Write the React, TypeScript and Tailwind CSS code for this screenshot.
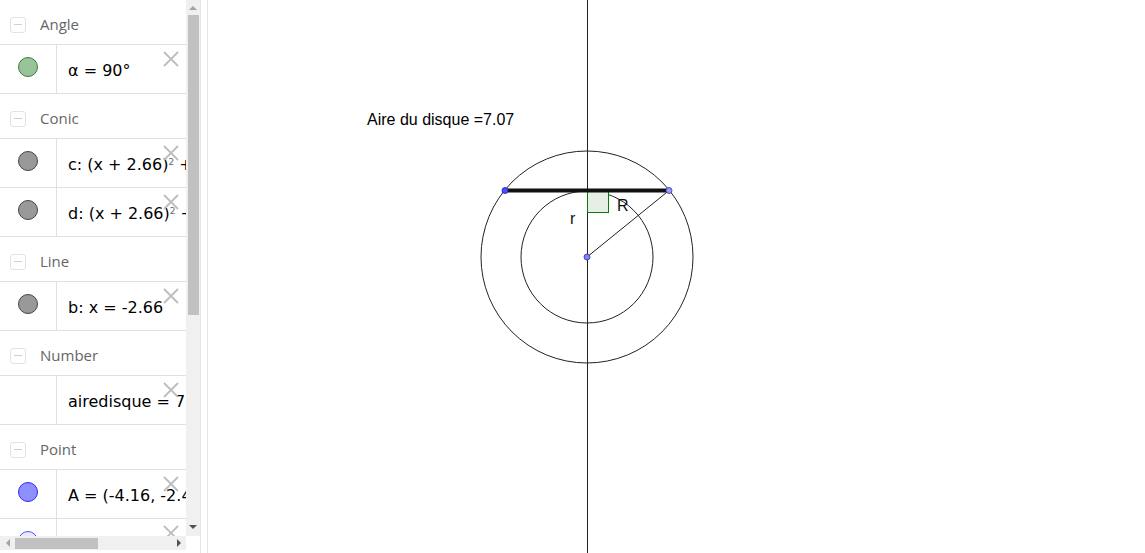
import React from "react";

function Header({ label }: { label: string }) {
  return (
    <div className="h-[45px] flex items-center border-b border-[#e0e0e0] shrink-0">
      <div className="ml-[10px] mt-[5px] w-[16px] h-[16px] border border-[#e3e3e3] rounded-[3px] flex items-center justify-center">
        <div className="w-[8px] h-[1.5px] bg-[#cfcfcf]" />
      </div>
      <span className="ml-[14px] mt-[4px] text-[15px] text-[#666]" style={{ fontFamily: "'Open Sans', sans-serif" }}>{label}</span>
    </div>
  );
}

function XIcon() {
  return (
    <svg width="18" height="18" viewBox="0 0 18 18" className="absolute left-[162px] top-[5px]">
      <path d="M2 2 L16 16 M16 2 L2 16" stroke="#bdbdbd" strokeWidth="1.8" />
    </svg>
  );
}

function Row({ marker, children }: { marker?: { fill: string; stroke: string }; children: React.ReactNode }) {
  return (
    <div className="h-[49px] flex border-b border-[#e0e0e0] relative shrink-0">
      <div className="w-[57px] border-r border-[#e0e0e0] flex items-center justify-center shrink-0">
        {marker && (
          <div className="w-[20px] h-[20px] mb-[4px] rounded-full border" style={{ background: marker.fill, borderColor: marker.stroke }} />
        )}
      </div>
      <div className="pl-[11px] pt-[3px] flex items-center whitespace-nowrap text-[16px] text-black" style={{ fontFamily: "'DejaVu Sans', sans-serif" }}>
        {children}
      </div>
      <XIcon />
    </div>
  );
}

const green = { fill: "#99c499", stroke: "#3f7a3f" };
const gray = { fill: "#999999", stroke: "#444444" };
const blue = { fill: "#8f8fff", stroke: "#2a2aff" };

export default function App() {
  return (
    <div className="w-[1145px] h-[553px] flex bg-white overflow-hidden">
      <div className="w-[200px] h-full flex flex-col shrink-0">
        <div className="h-[536px] flex">
          <div className="w-[186px] overflow-hidden flex flex-col">
            <Header label="Angle" />
            <Row marker={green}><span>α = 90°</span></Row>
            <Header label="Conic" />
            <Row marker={gray}><span>c: (x + 2.66)<sup className="text-[9px] text-[#666]">2</sup> + (y + 2.41)<sup>2</sup> = 11.26</span></Row>
            <Row marker={gray}><span>d: (x + 2.66)<sup className="text-[9px] text-[#666]">2</sup> + (y + 2.41)<sup>2</sup> = 4.5</span></Row>
            <Header label="Line" />
            <Row marker={gray}><span>b: x = -2.66</span></Row>
            <Header label="Number" />
            <Row><span>airedisque = 7.07</span></Row>
            <Header label="Point" />
            <Row marker={blue}><span>A = (-4.16, -2.41)</span></Row>
            <Row marker={{ fill: "#e8e8ff", stroke: "#5050ff" }}><span>B = (-0.99, -2.41)</span></Row>
          </div>
          <div className="w-[14px] bg-[#f0f0f0] flex flex-col items-center">
            <div className="h-[15px] flex items-center justify-center">
              <div className="w-0 h-0 border-l-[4px] border-r-[4px] border-b-[4px] border-l-transparent border-r-transparent border-b-[#a3a3a3]" />
            </div>
            <div className="w-[11px] h-[300px] bg-[#c1c1c1]" />
            <div className="flex-1" />
            <div className="h-[18px] flex items-center justify-center">
              <div className="w-0 h-0 border-l-[4px] border-r-[4px] border-t-[4px] border-l-transparent border-r-transparent border-t-[#505050]" />
            </div>
          </div>
        </div>
        <div className="h-[14px] flex">
          <div className="w-[186px] bg-[#f0f0f0] flex items-center">
            <div className="w-[15px] flex items-center justify-center">
              <div className="w-0 h-0 border-t-[4px] border-b-[4px] border-r-[4px] border-t-transparent border-b-transparent border-r-[#a3a3a3]" />
            </div>
            <div className="w-[83px] h-[11px] bg-[#c1c1c1]" />
            <div className="flex-1" />
            <div className="w-[15px] flex items-center justify-center">
              <div className="w-0 h-0 border-t-[4px] border-b-[4px] border-l-[4px] border-t-transparent border-b-transparent border-l-[#505050]" />
            </div>
          </div>
        </div>
      </div>
      <div className="w-[8px] h-full border-l border-r border-[#e6e6e6] bg-white shrink-0" />
      <div className="flex-1 h-full relative">
        <svg width="937" height="553" viewBox="208 0 937 553" className="absolute inset-0">
          <line x1="587.5" y1="0" x2="587.5" y2="553" stroke="#222" strokeWidth="1" />
          <circle cx="587" cy="257" r="106" fill="none" stroke="#222" strokeWidth="1" />
          <circle cx="587" cy="257" r="66" fill="none" stroke="#222" strokeWidth="1" />
          <rect x="587.5" y="191.5" width="21" height="21" fill="#e6efe6" stroke="#0a7a0a" strokeWidth="1" />
          <line x1="587" y1="257" x2="669" y2="190.5" stroke="#222" strokeWidth="1" />
          <line x1="505" y1="190.5" x2="669" y2="190.5" stroke="#111" strokeWidth="4" />
          <circle cx="505" cy="190.5" r="3" fill="#4c4cff" stroke="#1a1acc" strokeWidth="0.8" />
          <circle cx="669" cy="190.5" r="3" fill="#9a9aff" stroke="#333399" strokeWidth="0.8" />
          <circle cx="587" cy="257" r="3" fill="#8080ff" stroke="#333399" strokeWidth="0.8" />
          <text x="570" y="224" fontSize="16" fontFamily="'Liberation Sans', Arial, sans-serif" fill="#111">r</text>
          <text x="617" y="211" fontSize="16" fontFamily="'Liberation Sans', Arial, sans-serif" fill="#111">R</text>
          <text x="367" y="125" fontSize="16" fontFamily="'Liberation Sans', Arial, sans-serif" fill="#000">Aire du disque =7.07</text>
        </svg>
      </div>
    </div>
  );
}
